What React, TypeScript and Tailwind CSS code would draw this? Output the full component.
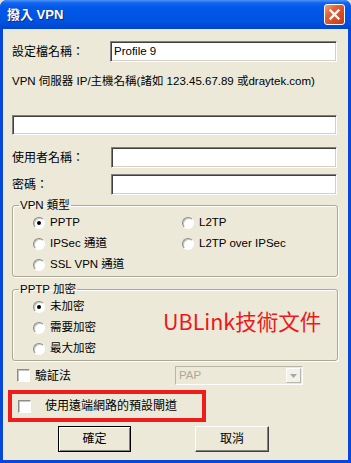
import React from "react";

function Radio({ label, checked = false }: { label: string; checked?: boolean }) {
  return (
    <div className="flex h-[21px] items-center gap-[5px] whitespace-nowrap">
      <span className="flex h-[12px] w-[12px] items-center justify-center rounded-full border border-t-[#8a8a8a] border-l-[#8a8a8a] border-r-white border-b-white bg-white shadow-[inset_1px_1px_0_#c8c8c0]">
        {checked && <span className="h-[4px] w-[4px] rounded-full bg-black" />}
      </span>
      <span>{label}</span>
    </div>
  );
}

function Check() {
  return (
    <span className="block h-[13px] w-[13px] shrink-0 border border-t-[#8c8c8c] border-l-[#8c8c8c] border-r-white border-b-white bg-white shadow-[inset_1px_1px_0_#c4c4bc]" />
  );
}

function Field({ value = "" }: { value?: string }) {
  return (
    <div className="flex h-full flex-1 items-center border border-t-[#808080] border-l-[#808080] border-r-white border-b-white bg-white pl-[3px] shadow-[inset_1px_1px_0_#404040,inset_-1px_-1px_0_#d4d0c8]">
      {value}
    </div>
  );
}

export default function App() {
  return (
    <div className="h-[463px] w-[351px] bg-[#e0e0e0] font-['Liberation_Sans','Noto_Sans_CJK_TC',sans-serif]">
      <div className="flex h-full flex-col overflow-hidden rounded-t-[7px] bg-[#0848d8]">
        <div className="flex h-[29px] shrink-0 items-center justify-between bg-[linear-gradient(to_bottom,#4a95f8_0px,#1262ee_3px,#0058e8_8px,#0054e2_20px,#0046d0_29px)] pl-[7px] pr-[6px]">
          <span className="text-[13px] font-bold text-white [text-shadow:1px_1px_0_#0a2c88]">撥入 VPN</span>
          <div className="flex h-[21px] w-[21px] items-center justify-center rounded-[3px] border border-white bg-[linear-gradient(135deg,#f2a285_0%,#e2603a_35%,#d24a25_70%,#c03a18_100%)]">
            <svg width="13" height="13" viewBox="0 0 13 13">
              <path d="M2.5 2.5 L10.5 10.5 M10.5 2.5 L2.5 10.5" stroke="white" strokeWidth="2.3" strokeLinecap="square" />
            </svg>
          </div>
        </div>
        <div className="mx-[3px] mb-[3px] flex flex-1 flex-col bg-[#ece9d8] pl-[9px] pr-[10px] pt-[12px] text-[11.5px] text-black">
          <div className="flex h-[21px] items-center pr-[1px]">
            <span className="w-[98px] text-[12px]">設定檔名稱：</span>
            <Field value="Profile 9" />
          </div>
          <div className="mt-[12px] flex h-[16px] items-center whitespace-nowrap">
            VPN 伺服器 IP/主機名稱(諸如 123.45.67.89 或draytek.com)
          </div>
          <div className="mt-[25px] flex h-[20px] pr-[1px]">
            <Field />
          </div>
          <div className="mt-[12px] flex h-[21px] items-center pr-[1px]">
            <span className="w-[99px] text-[12px]">使用者名稱：</span>
            <Field />
          </div>
          <div className="mt-[6px] flex h-[21px] items-center pr-[1px]">
            <span className="w-[99px] text-[12px]">密碼：</span>
            <Field />
          </div>

          <fieldset className="mt-[3px] rounded-[3px] border border-[#aca899] p-0 pb-[1px] shadow-[inset_1px_1px_0_#fff,1px_1px_0_#fff]">
            <legend className="ml-[6px] px-[1px] leading-[14px]">VPN 類型</legend>
            <div className="grid grid-cols-[149px_1fr] pl-[20px]">
              <Radio checked label="PPTP" />
              <Radio label="L2TP" />
              <Radio label="IPSec 通道" />
              <Radio label="L2TP over IPSec" />
              <Radio label="SSL VPN 通道" />
            </div>
          </fieldset>

          <fieldset className="mt-[5px] rounded-[3px] border border-[#aca899] p-0 pb-[1px] shadow-[inset_1px_1px_0_#fff,1px_1px_0_#fff]">
            <legend className="ml-[6px] px-[1px] leading-[14px]">PPTP 加密</legend>
            <div className="relative flex flex-col pl-[20px]">
              <Radio checked label="未加密" />
              <Radio label="需要加密" />
              <Radio label="最大加密" />
              <div className="absolute left-[150px] top-[14px] whitespace-nowrap font-['Noto_Sans_CJK_TC',sans-serif] text-[21.5px] leading-[22px] text-[#ee1818]">
                UBLink技術文件
              </div>
            </div>
          </fieldset>

          <div className="mt-[4px] flex h-[21px] items-center">
            <div className="flex w-[163px] items-center gap-[5px] pl-[5px]">
              <Check />
              <span className="text-[12px]">驗証法</span>
            </div>
            <div className="flex h-[19px] w-[128px] items-center justify-between border border-t-[#b8b6a8] border-l-[#b8b6a8] border-r-white border-b-white bg-[#ece9d8] pl-[3px] pr-[1px] text-[#aca899]">
              <span>PAP</span>
              <span className="flex h-[15px] w-[15px] items-center justify-center border border-t-white border-l-white border-r-[#b8b6a8] border-b-[#b8b6a8] bg-[#f2f1ea]">
                <svg width="7" height="4" viewBox="0 0 7 4">
                  <path d="M0 0 H7 L3.5 4 Z" fill="#aca899" />
                </svg>
              </span>
            </div>
          </div>

          <div className="ml-[-4px] mt-[4px] flex h-[32px] w-[198px] items-center gap-[14px] border-4 border-[#ee1c1c] pl-[6px]">
            <Check />
            <span className="whitespace-nowrap text-[12px]">使用遠端網路的預設閘道</span>
          </div>

          <div className="mt-[4px] flex text-[12px]">
            <button className="ml-[46px] flex h-[26px] w-[73px] items-center justify-center border border-black bg-[#ece9d8] shadow-[inset_1px_1px_0_#fff,inset_-1px_-1px_0_#808080]">
              確定
            </button>
            <button className="ml-[64px] flex h-[26px] w-[74px] items-center justify-center border border-t-white border-l-white border-r-[#404040] border-b-[#404040] bg-[#ece9d8] shadow-[inset_-1px_-1px_0_#808080]">
              取消
            </button>
          </div>
        </div>
      </div>
    </div>
  );
}
